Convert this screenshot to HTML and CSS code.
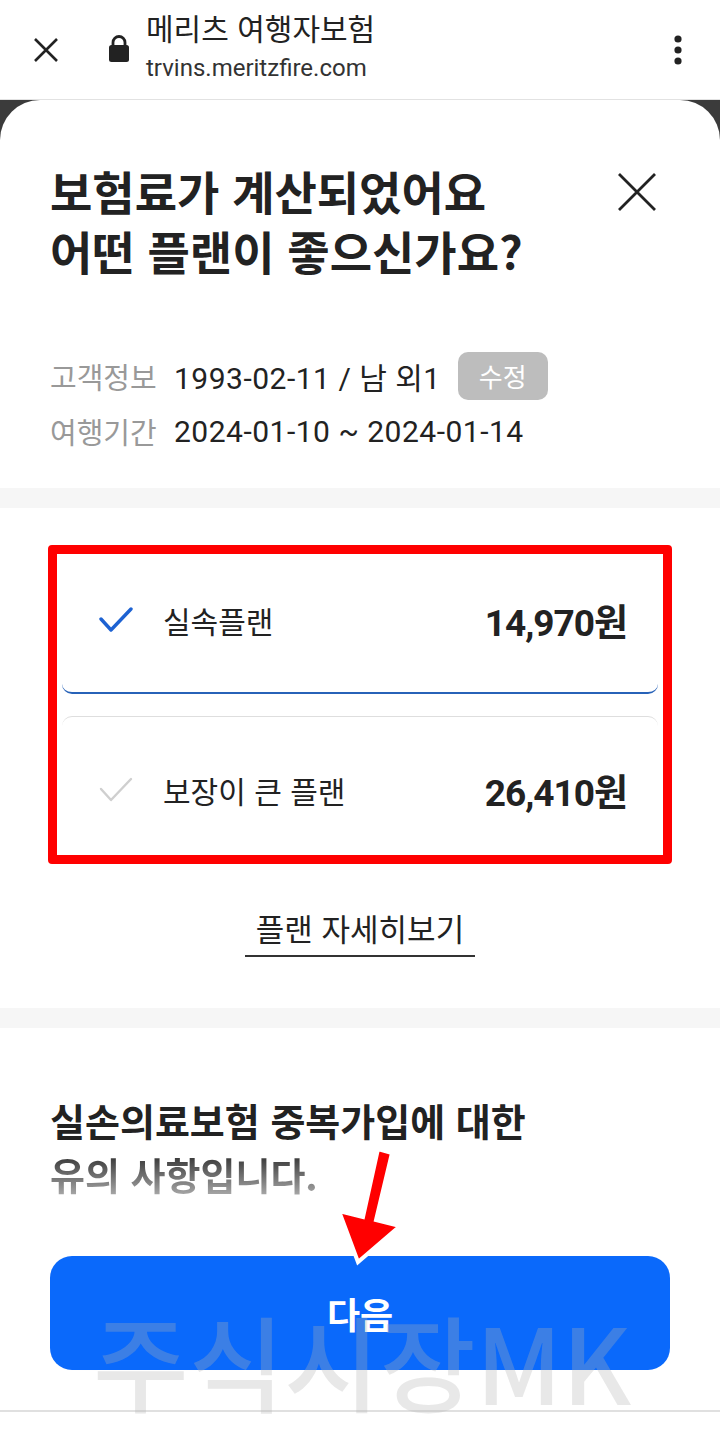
FILE: index.html
```html
<!DOCTYPE html>
<html lang="ko">
<head>
<meta charset="UTF-8" />
<meta name="viewport" content="width=device-width, initial-scale=1" />
<title>메리츠 여행자보험</title>
<link rel="stylesheet" href="styles.css">
</head>
<body>

<header class="browser-bar">
  <svg class="bar-close" width="26" height="26" viewBox="0 0 26 26">
    <path d="M2 2 L24 24 M24 2 L2 24" stroke="#222" stroke-width="2.6" fill="none" />
  </svg>
  <svg class="bar-lock" width="22" height="28" viewBox="0 0 22 28">
    <path d="M5 12 V8.5 a6 6 0 0 1 12 0 V12" stroke="#222" stroke-width="2.8" fill="none" />
    <rect x="1" y="11" width="20" height="17" rx="2.5" fill="#222" />
  </svg>
  <div class="bar-text">
    <div class="bar-title">메리츠 여행자보험</div>
    <div class="bar-url">trvins.meritzfire.com</div>
  </div>
  <svg class="bar-menu" width="10" height="30" viewBox="0 0 10 30">
    <circle cx="5" cy="4" r="3.6" fill="#222" />
    <circle cx="5" cy="15" r="3.6" fill="#222" />
    <circle cx="5" cy="26" r="3.6" fill="#222" />
  </svg>
</header>

<div class="sheet">
  <section class="sheet-head">
    <h1>보험료가 계산되었어요<br />어떤 플랜이 좋으신가요?</h1>
    <svg class="sheet-close" width="40" height="40" viewBox="0 0 40 40">
      <path d="M2 2 L38 38 M38 2 L2 38" stroke="#222" stroke-width="2.8" fill="none" />
    </svg>
  </section>

  <div class="info">
    <div class="info-row">
      <span class="info-label">고객정보</span>
      <span class="info-value">1993-02-11 / 남 외1</span>
      <span class="badge">수정</span>
    </div>
    <div class="info-row">
      <span class="info-label">여행기간</span>
      <span class="info-value">2024-01-10 ~ 2024-01-14</span>
    </div>
  </div>

  <div class="band"></div>

  <section class="plans">
    <div class="plan-list">
      <div class="plan selected">
        <svg class="check" width="34" height="26" viewBox="0 0 34 26">
          <path d="M2 12 L12 23 L32 2" stroke="#1d62d2" stroke-width="3.4" fill="none" stroke-linecap="round" stroke-linejoin="round" />
        </svg>
        <span class="plan-name">실속플랜</span>
        <span class="plan-price">14,970원</span>
      </div>
      <div class="plan">
        <svg class="check" width="34" height="26" viewBox="0 0 34 26">
          <path d="M2 12 L12 23 L32 2" stroke="#cfcfcf" stroke-width="2.4" fill="none" stroke-linecap="round" stroke-linejoin="round" />
        </svg>
        <span class="plan-name">보장이 큰 플랜</span>
        <span class="plan-price">26,410원</span>
      </div>
      <div class="mark-frame"></div>
    </div>
    <a class="detail-link" href="#">플랜 자세히보기</a>
  </section>

  <div class="band"></div>

  <section class="notice">
    <h2>실손의료보험 중복가입에 대한<br /><span class="fade">유의 사항입니다.</span></h2>
    <button class="next-btn">다음</button>
    <div class="watermark">주식시장MK</div>
    <svg class="mark-arrow" width="80" height="130" viewBox="330 1140 80 130">
      <polygon points="378,1149 392,1153 376,1220 400,1226 358,1262 339,1211 363,1217" fill="#f00" stroke="#fff" stroke-width="4" stroke-linejoin="miter" />
    </svg>
  </section>

  <div class="bottom-line"></div>
</div>

</body>
</html>
```

FILE: styles.css
```css
body {
  margin: 0;
  background: #3b3b3b;
  font-family: Roboto, 'Noto Sans CJK KR', sans-serif;
  color: #222;
  width: 720px;
  overflow: hidden;
}

/* browser top bar */
.browser-bar {
  height: 99px;
  background: #fff;
  border-bottom: 1px solid #e2e2e2;
  display: flex;
  align-items: center;
  padding: 0 0 0 33px;
}
.bar-close {
  margin-right: 49px;
}
.bar-lock {
  margin-right: 16px;
  margin-top: -4px;
}
.bar-text {
  flex: 1;
  margin-top: -8px;
}
.bar-title {
  font-family: 'Noto Sans CJK KR', sans-serif;
  font-size: 30px;
  line-height: 36px;
  color: #222;
}
.bar-url {
  margin-top: 8px;
  font-size: 24px;
  line-height: 30px;
  color: #333;
}
.bar-menu {
  margin-right: 37px;
}

/* bottom sheet */
.sheet {
  background: #fff;
  border-radius: 40px 40px 0 0;
  min-height: 1340px;
}
.sheet-head {
  display: flex;
  justify-content: space-between;
  align-items: flex-start;
  padding: 60px 63px 0 50px;
}
.sheet-head h1 {
  margin: 0;
  font-family: 'Noto Sans CJK KR', sans-serif;
  font-size: 46px;
  line-height: 60px;
  font-weight: 700;
  letter-spacing: 0;
  color: #222;
}
.sheet-close {
  margin-top: 12px;
}

.info {
  margin-top: 72px;
  padding: 0 50px;
  display: flex;
  flex-direction: column;
  gap: 7px;
}
.info-row {
  display: flex;
  align-items: center;
  height: 48px;
}
.info-label {
  font-family: 'Noto Sans CJK KR', sans-serif;
  font-size: 29px;
  color: #999;
  width: 124px;
}
.info-value {
  font-size: 30px;
  letter-spacing: 0.5px;
  color: #222;
}
.badge {
  margin-left: 17px;
  height: 48px;
  line-height: 48px;
  padding: 0 21px;
  background: #bdbdbd;
  color: #fff;
  border-radius: 10px;
  font-family: 'Noto Sans CJK KR', sans-serif;
  font-size: 26px;
}

.band {
  height: 20px;
  background: #f6f6f6;
  margin-top: 33px;
}

/* plans */
.plans {
  padding: 39px 62px 0;
  display: flex;
  flex-direction: column;
  align-items: center;
}
.plan-list {
  position: relative;
  align-self: stretch;
  display: flex;
  flex-direction: column;
  gap: 22px;
}
.plan {
  height: 147px;
  box-sizing: border-box;
  display: flex;
  align-items: center;
  padding: 0 31px 0 37px;
  border-radius: 10px;
  border-top: 1px solid #dedede;
}
.plan.selected {
  border-top: none;
  border-bottom: 2px solid #2762b8;
}
.check {
  margin-right: 30px;
}
.plan-name {
  flex: 1;
  font-family: 'Noto Sans CJK KR', sans-serif;
  font-size: 30px;
  color: #222;
}
.plan-price {
  font-size: 37px;
  font-weight: 700;
  letter-spacing: -1px;
  color: #222;
}

/* red annotation box */
.mark-frame {
  position: absolute;
  left: -14px;
  right: -14px;
  top: -2px;
  bottom: -1px;
  border: 9px solid #f00;
  border-radius: 4px;
  pointer-events: none;
}

.detail-link {
  margin-top: 46px;
  padding: 0 11px 8px;
  border-bottom: 2px solid #333;
  font-family: 'Noto Sans CJK KR', sans-serif;
  font-size: 31px;
  line-height: 38px;
  color: #222;
  text-decoration: none;
}
.plans + .band {
  margin-top: 51px;
}

/* notice + next */
.notice {
  position: relative;
  padding: 65px 50px 0;
}
.notice h2 {
  margin: 0;
  font-family: 'Noto Sans CJK KR', sans-serif;
  font-size: 38px;
  line-height: 54px;
  font-weight: 700;
  letter-spacing: 0;
  color: #222;
}
.notice .fade {
  background: linear-gradient(#3a3a3a 20%, #b0b0b0 95%);
  -webkit-background-clip: text;
  background-clip: text;
  color: transparent;
}
.next-btn {
  display: block;
  width: 100%;
  height: 114px;
  margin-top: 55px;
  border: none;
  border-radius: 22px;
  background: #0a69fb;
  color: #fff;
  font-family: 'Noto Sans CJK KR', sans-serif;
  font-size: 36px;
  font-weight: 700;
}
.watermark {
  position: absolute;
  left: 93px;
  top: 270px;
  font-family: 'Noto Sans CJK KR', sans-serif;
  font-size: 104px;
  line-height: 124px;
  font-weight: 500;
  color: rgba(180, 180, 180, 0.3);
  white-space: nowrap;
  pointer-events: none;
}
.mark-arrow {
  position: absolute;
  left: 330px;
  top: 112px;
}

.bottom-line {
  margin-top: 40px;
  border-top: 2px solid #e0e0e0;
}
```
